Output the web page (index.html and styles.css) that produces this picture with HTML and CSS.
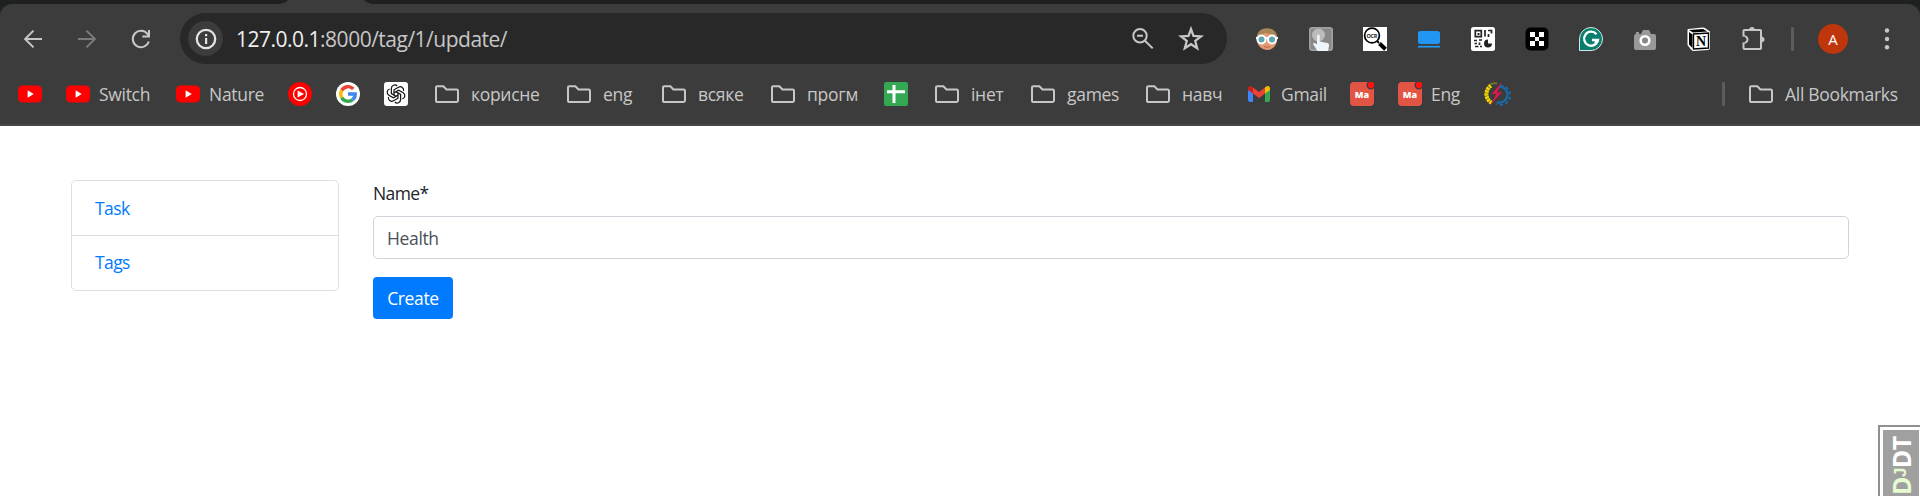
FILE: index.html
```
<!DOCTYPE html>
<html lang="en">
<head>
<meta charset="utf-8">
<title>Update tag</title>
<link rel="stylesheet" href="styles.css">
</head>
<body>
<svg width="0" height="0" class="defs">
  <symbol id="yt" viewBox="0 0 24 24"><rect x="0" y="3.500" width="24" height="17" rx="4.500" fill="#f00"/><path d="M9.600 8.300v7.400l6.200-3.700z" fill="#fff"/></symbol>
  <symbol id="folder" viewBox="0 0 30 24"><path d="M4 19V5.600q0-1.400 1.400-1.400h6l3 3.200h10.200q1.400 0 1.400 1.400V18.600q0 1.400-1.400 1.400H5q-1 0-1-1z" fill="none" stroke="#c7c7c7" stroke-width="2"/></symbol>
  <symbol id="ma" viewBox="0 0 24 24"><rect width="24" height="24" rx="4" fill="#e25544"/><circle cx="21" cy="3" r="4.500" fill="#3c3c3c"/><circle cx="21" cy="3" r="3.200" fill="#f11"/><text x="12" y="15.800" text-anchor="middle" class="ma-text">Ma</text></symbol>
</svg>
<header class="chrome">
  <div class="tab-strip"><span class="active-tab"></span></div>
  <div class="panel">
    <div class="toolbar">
      <div class="nav">
        <svg viewBox="0 0 24 24" width="24" height="24" fill="none" stroke="#c7c7c7" stroke-width="2"><path d="M21 12H4.500M12.500 3.600L4.100 12l8.400 8.400"/></svg>
        <svg viewBox="0 0 24 24" width="24" height="24" fill="none" stroke="#7b7b7b" stroke-width="2"><path d="M3 12h16.500M11.500 3.600l8.400 8.400-8.400 8.400"/></svg>
        <svg viewBox="0 0 24 24" width="24" height="24" fill="none" stroke="#c7c7c7" stroke-width="2"><path d="M19.800 14.500A8.200 8.200 0 1 1 18.600 7.100L20 9M20 3v6.600h-6.700"/></svg>
      </div>
      <div class="omnibox">
        <span class="info"><svg viewBox="0 0 24 24" width="24" height="24"><circle cx="12" cy="12" r="9.200" fill="none" stroke="#e3e3e3" stroke-width="2.300"/><path d="M11 11h2.200v6H11zM11 7h2.200v2.200H11z" fill="#e3e3e3"/></svg></span>
        <span class="url"><b>127.0.0.1</b>:8000/tag/1/update/</span>
        <svg class="zoom" viewBox="0 0 24 24" width="24" height="24" fill="none" stroke="#c7c7c7" stroke-width="2"><circle cx="9" cy="8.700" r="6.700"/><path d="M6 8.700h6M13.700 13.500l8 7.900"/></svg>
        <svg class="star" viewBox="0 0 24 24" width="26" height="26" fill="none" stroke="#c7c7c7" stroke-width="2.100"><path d="M12 2.800l2.300 6.400 6.900.4-5.300 4.200 1.800 6.700-5.700-3.700-5.700 3.700 1.800-6.700-5.300-4.200 6.900-.4z"/></svg>
      </div>
      <div class="extensions">
        <svg viewBox="0 0 24 24" width="24" height="24"><circle cx="12" cy="13" r="10" fill="#e29a72"/><path d="M1.500 13C1 5 6 1 12 1.200S23 5 22.500 13L19 8l-9-2-5 4z" fill="#a98657"/><path d="M1 11h22" stroke="#fff" stroke-width="2"/><g fill="#5ea5b0" stroke="#fff" stroke-width="2"><circle cx="6.500" cy="12.500" r="4"/><circle cx="17" cy="12.500" r="4"/></g><path d="M9 19.500q3 1.500 6 0" stroke="#c85b4a" fill="none"/></svg>
        <svg viewBox="0 0 24 24" width="24" height="24"><rect width="24" height="24" rx="3" fill="#949494"/><rect x="1" y="1" width="22" height="22" rx="2" fill="#888" stroke="#aaa"/><circle cx="9.500" cy="8" r="6.500" fill="#bbb"/><path d="M8 8.500q1.500-2 2.700 0v6l7.800 1.500q2 .5 1.500 3l-1 5H8.500L4 17q.5-2 4 .5z" fill="#edf5fc"/></svg>
        <svg viewBox="0 0 24 24" width="24" height="24"><rect width="24" height="24" fill="#fff"/><circle cx="9" cy="8.500" r="7.400" fill="#fff" stroke="#000" stroke-width="1.700"/><path d="M14 14l2 2" stroke="#000" stroke-width="2"/><path d="M16.500 16.500l6 5.700" stroke="#000" stroke-width="4"/><text x="9" y="10.500" text-anchor="middle" textLength="11" class="ocr">OCR</text></svg>
        <svg viewBox="0 0 24 24" width="24" height="24" fill="#2196f3"><rect x="1" y="4" width="22" height="13" rx="2.500"/><rect x="1" y="18.800" width="22" height="1.800"/></svg>
        <svg viewBox="0 0 24 24" width="24" height="24"><rect width="24" height="24" rx="2.500" fill="#fff"/><g fill="none" stroke="#222" stroke-width="1.700"><path d="M4.300 3.700h6v6h-6zM14 3v6.500M17 3.500h3.500v3M17.500 7v3M3 13.500h3M8 13h3M6 16.500H3.500M4 19.500h3.500M9 19.500h2M8.500 15.500v2.500"/></g><path d="M6.500 6h2v2h-2z" fill="#222"/><path d="M17 12.500a4 4 0 1 0 4 4h-4z" fill="#222"/></svg>
        <svg viewBox="0 0 24 24" width="24" height="24"><rect x=".5" y=".5" width="23" height="23" rx="5" fill="#000"/><path d="M5 5h5v5H5zM14 5h5v5h-5zM10 10h4v4h-4zM5 14h5v5H5zM14 14h5v5h-5z" fill="#fff"/></svg>
        <svg viewBox="0 0 24 24" width="24" height="24"><path d="M.5 23.500V12A11.500 11.500 0 1 1 12 23.500z" fill="#087f6c" stroke="#d5e8e4"/><path d="M17.500 7.200A7 7 0 1 0 19 13h-6M16 16l3.200-3.200" fill="none" stroke="#fff" stroke-width="2.300"/></svg>
        <svg viewBox="0 0 24 24" width="24" height="24"><path d="M3 7V5h3v2h2l2-4h6l2 4h3q2 0 2 2v12q0 2-2 2H3q-2 0-2-2V9q0-2 2-2z" fill="#999"/><circle cx="12" cy="13.500" r="4.300" fill="#888" stroke="#fff" stroke-width="2.600"/></svg>
        <svg viewBox="0 0 24 24" width="24" height="24"><path d="M1 2l14.500-1.500q2 0 3.500 1.200L23 4.500V21q0 2-2 2L7 24q-2 0-3-1.500L.5 18V3z" fill="#fff"/><path d="M2 3l14-1 4.500 2.500L6 5.500zM2 5l3.500 2.500v13.500L2 17.500z" fill="#000"/><path d="M6.500 7L21.500 6v15L6.500 22z" fill="#fff" stroke="#000" stroke-width="1.400"/><text x="14" y="19" text-anchor="middle" class="notion">N</text></svg>
        <svg viewBox="0 0 24 24" width="24" height="24" fill="none" stroke="#c7c7c7" stroke-width="2"><path d="M2.500 9V4q0-1 1-1H19q1 0 1 1v17q0 1-1 1H3.500q-1 0-1-1v-5q4-.5 4-3.500t-4-3.500z"/><path d="M8 3q.3-3 3-3t3 3zM20 9.500q3.500.3 3.500 3t-3.500 3z" fill="#c7c7c7" stroke="none"/><path d="M2.500 9.600v5.800" stroke="#3c3c3c" stroke-width="2.600"/></svg>
      </div>
      <span class="rule toolbar-rule"></span>
      <span class="avatar">A</span>
      <svg class="menu" viewBox="0 0 6 24" width="6" height="24" fill="#c7c7c7"><circle cx="3" cy="3.500" r="2.200"/><circle cx="3" cy="12" r="2.200"/><circle cx="3" cy="20.300" r="2.200"/></svg>
    </div>
    <nav class="bookmarks">
      <a><svg width="24" height="24"><use href="#yt"/></svg></a>
      <a><svg width="24" height="24"><use href="#yt"/></svg><span class="w-switch">Switch</span></a>
      <a><svg width="24" height="24"><use href="#yt"/></svg><span class="w-nature">Nature</span></a>
      <a><svg viewBox="0 0 24 24" width="24" height="24"><circle cx="12" cy="12" r="12" fill="#f00"/><circle cx="12" cy="12" r="6.500" fill="none" stroke="#fff" stroke-width="1.300"/><path d="M9.600 8.400v7.200L16 12z" fill="#fff"/></svg></a>
      <a><svg viewBox="0 0 24 24" width="24" height="24" fill="none" stroke-width="3.400"><circle cx="12" cy="12" r="12" fill="#fff"/><path d="M5.700 8.400A7.300 7.300 0 0 1 17.300 6.900" stroke="#ea4335"/><path d="M5.700 8.400a7.300 7.300 0 0 0 0 7.200" stroke="#fbbc05"/><path d="M5.700 15.600A7.300 7.300 0 0 0 16.700 17.600" stroke="#34a853"/><path d="M12 12h7.200q.2 3.500-2.500 5.600" stroke="#4285f4"/></svg></a>
      <a><svg viewBox="0 0 24 24" width="24" height="24"><rect width="24" height="24" rx="3" fill="#fff"/><g fill="none" stroke="#111" stroke-width="1.200"><path id="petal" d="M10 13.200V7.800l4.500-2.600a3.400 3.400 0 0 1 5 3.800"/><use href="#petal" transform="rotate(60 12 12)"/><use href="#petal" transform="rotate(120 12 12)"/><use href="#petal" transform="rotate(180 12 12)"/><use href="#petal" transform="rotate(240 12 12)"/><use href="#petal" transform="rotate(300 12 12)"/></g></svg></a>
      <a><svg width="30" height="24"><use href="#folder"/></svg><span class="w-useful">корисне</span></a>
      <a><svg width="30" height="24"><use href="#folder"/></svg><span class="w-eng">eng</span></a>
      <a><svg width="30" height="24"><use href="#folder"/></svg><span class="w-misc">всяке</span></a>
      <a><svg width="30" height="24"><use href="#folder"/></svg><span class="w-prog">прогм</span></a>
      <a><svg viewBox="0 0 24 24" width="24" height="24"><rect width="24" height="24" rx="2" fill="#34a853"/><path d="M8.500 3h3v5.300H21v3h-9.500V21h-3v-9.700H3v-3h5.500z" fill="#fff"/></svg></a>
      <a><svg width="30" height="24"><use href="#folder"/></svg><span class="w-inet">інет</span></a>
      <a><svg width="30" height="24"><use href="#folder"/></svg><span class="w-games">games</span></a>
      <a><svg width="30" height="24"><use href="#folder"/></svg><span class="w-study">навч</span></a>
      <a><svg viewBox="0 0 24 24" width="24" height="24"><path d="M0 6v12q0 2 2 2h3V9.500z" fill="#4285f4"/><path d="M22 6v12q0 2-2 2h-3V9.500z" fill="#34a853"/><path d="M17 5.500v6l5-3.500V6.200q-.5-3-3.600-1.800z" fill="#fbbc04"/><path d="M5 5.500l6 4.500 6-4.500v6L11 16l-6-4.500z" fill="#ea4335"/><path d="M5 5.500v6L0 8V6.200q.5-3 3.600-1.800z" fill="#c5221f"/></svg><span class="w-gmail">Gmail</span></a>
      <a><svg width="24" height="24"><use href="#ma"/></svg></a>
      <a><svg width="24" height="24"><use href="#ma"/></svg><span class="w-english">Eng</span></a>
      <a><svg viewBox="0 0 24 24" width="24" height="24" fill="none"><path d="M15 4.600a8 8 0 1 1-2 15.600" stroke="#176baa" stroke-width="2.200"/><path d="M16.500 3.700a9.500 9.500 0 1 1-4 18" stroke="#176baa" stroke-width="2" stroke-dasharray="3 2.500"/><path d="M7 3.700A10 10 0 0 0 7.500 20.800" stroke="#f1da00" stroke-width="4" stroke-dasharray="2.500 .5"/><path d="M6 2.500q4-2 7-1" stroke="#79702a" stroke-width="2"/><path d="M18 0L7.500 12.300l5-.5L6 23.500 18 10l-5 .8z" fill="#e0174f"/></svg></a>
      <span class="rule all-rule"></span>
      <a class="all"><svg width="30" height="24"><use href="#folder"/></svg><span class="w-all">All Bookmarks</span></a>
    </nav>
  </div>
</header>
<main class="page">
  <ul class="side">
    <li><a class="link">Task</a></li>
    <li><a class="link">Tags</a></li>
  </ul>
  <form class="form">
    <label for="name">Name*</label>
    <input id="name" type="text" value="Health">
    <button type="button">Create</button>
  </form>
</main>
<aside class="debug"><div class="debug-inner"><span class="dj">D<small>J</small></span>DT</div></aside>
</body>
</html>
```
FILE: styles.css
```
* { box-sizing: border-box; }
body { margin: 0; height: 496px; overflow: hidden; position: relative; background: #fff; font-family: "Open Sans", "Noto Sans", sans-serif; }
svg { display: block; flex: none; overflow: visible; }
.defs { position: absolute; }
.chrome { height: 126px; background: #1f2020; }
.tab-strip { height: 4px; padding-left: 280px; }
.active-tab { display: block; width: 92px; height: 4px; background: #3c3c3c; clip-path: polygon(0 100%, 5px 60%, 8px 0, 84px 0, 87px 60%, 100% 100%); }
.panel { height: 122px; background: #3c3c3c; border-radius: 12px 12px 0 0; border-bottom: 2px solid #474747; }
.toolbar { display: flex; align-items: center; height: 69px; padding-left: 21px; }
.nav { display: flex; flex: none; gap: 30px; width: 159px; }
.omnibox { display: flex; flex: none; align-items: center; width: 1047px; height: 51px; padding: 0 23px 0 8px; border-radius: 26px; background: #282828; }
.info { display: flex; align-items: center; justify-content: center; width: 35px; height: 35px; margin-right: 13px; border-radius: 50%; background: #3c3c3c; }
.url { color: #c7c7c7; font-size: 21px; line-height: 30px; letter-spacing: -0.5px; white-space: nowrap; }
.url b { color: #f0f0f0; font-weight: 400; }
.zoom { margin-left: auto; margin-right: 23px; }
.extensions { display: flex; flex: none; gap: 30px; width: 510px; margin-left: 28px; }
.rule { flex: none; width: 3px; height: 24px; border-radius: 1px; background: #5c5c5c; }
.toolbar-rule { margin-left: 26px; }
.avatar { width: 30px; height: 30px; margin-left: 24px; border-radius: 50%; background: #bf360c; color: #fff; font-size: 15px; line-height: 30px; text-align: center; }
.menu { margin-left: 36px; }
.bookmarks { display: flex; align-items: center; gap: 24px; height: 42px; padding-left: 18px; color: #c7c7c7; font-size: 17.5px; line-height: 24px; letter-spacing: -0.3px; white-space: nowrap; }
.bookmarks a { display: flex; gap: 8px; flex: none; }
.bookmarks span { flex: none; }
.bookmarks a span { padding-left: 1px; }
.w-switch { width: 54px; }
.w-nature { width: 56px; }
.w-useful { width: 70px; }
.w-eng { width: 33px; }
.w-misc { width: 47px; }
.w-prog { width: 54px; }
.w-inet { width: 34px; }
.w-games { width: 53px; }
.w-study { width: 43px; }
.w-gmail { width: 46px; }
.w-english { width: 30px; }
.w-all { width: 114px; }
.all-rule { margin-left: auto; margin-right: -3px; }
.all { margin-right: 22px; }
.ma-text { font: 800 9px "Open Sans", sans-serif; letter-spacing: 0; fill: #fff; }
.ocr { font: 700 5.5px "Open Sans", sans-serif; fill: #222; }
.notion { font: 700 14px "Liberation Serif", serif; fill: #000; }
.page { display: flex; gap: 34px; padding: 54px 71px 0; font-size: 17.5px; letter-spacing: -0.6px; }
.side { width: 268px; height: 111px; margin: 0; padding: 0; border: 1px solid #dfdfdf; border-radius: 5px; list-style: none; }
.side li { height: 54px; padding: 0 23px; line-height: 55px; }
.side li + li { height: 55px; border-top: 1px solid #dfdfdf; line-height: 53px; }
.link { color: #007bff; }
.form { display: flex; flex-direction: column; align-items: flex-start; width: 1476px; }
label { height: 36px; color: #212529; line-height: 27px; }
input { width: 100%; height: 43px; padding: 0 13px; border: 1px solid #ced4da; border-radius: 5px; color: #495057; font: inherit; letter-spacing: -0.35px; }
button { width: 80px; height: 42px; margin-top: 18px; padding: 0; border: 0; border-radius: 4px; background: #007bff; color: #fff; font: inherit; letter-spacing: -0.35px; }
.debug { position: absolute; right: 0; bottom: 0; width: 42px; height: 71px; padding: 3px 0 0 3px; border: solid #909090; border-width: 2px 0 0 2px; background: #fff; }
.debug-inner { height: 66px; padding: 1px 0 0; background: #a0a0a0; color: #fff; font-size: 25px; font-weight: 700; line-height: 35px; letter-spacing: -0.5px; writing-mode: vertical-rl; transform: rotate(180deg); }
.debug small { font-family: "Liberation Sans", sans-serif; font-size: 17px; letter-spacing: -0.8px; }
.dj { color: #e4fcd0; }
```
